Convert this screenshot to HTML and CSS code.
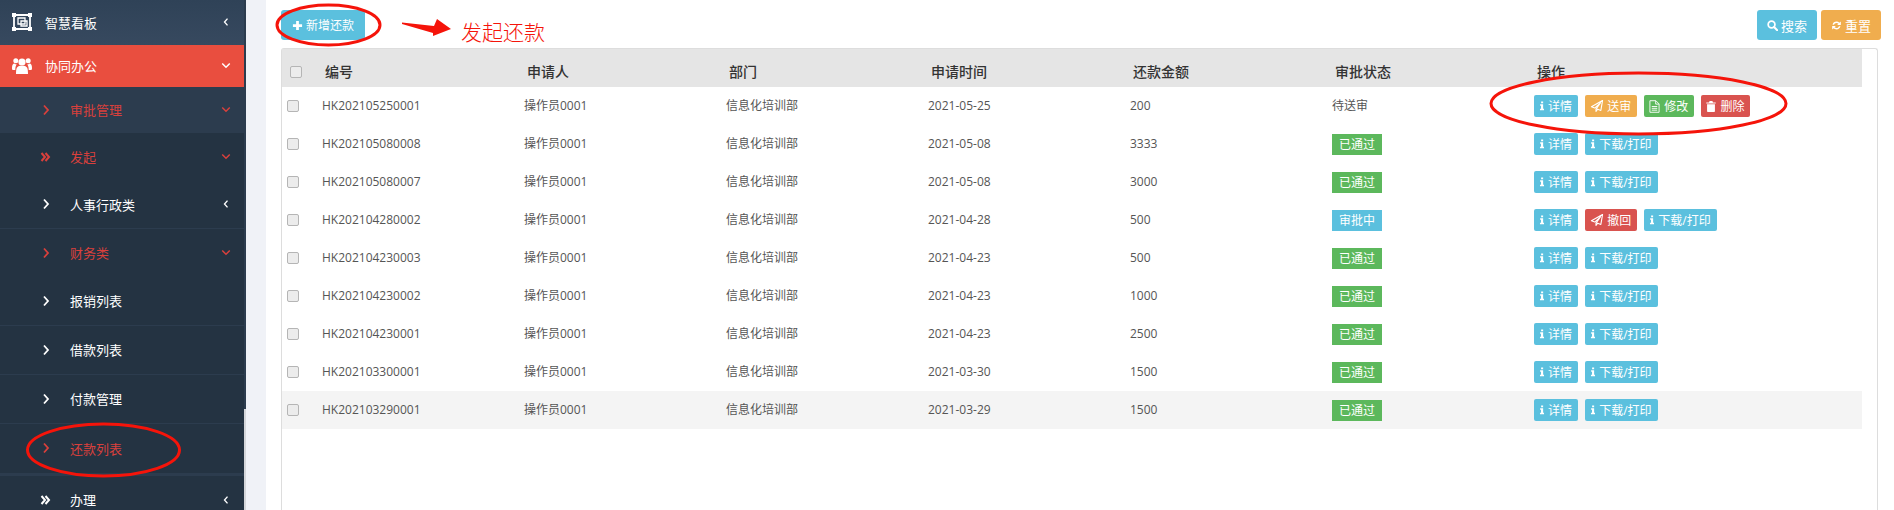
FILE: index.html
```html
<!DOCTYPE html>
<html lang="zh-CN">

<head>
    <meta charset="UTF-8">
    <meta name="viewport" content="width=device-width, initial-scale=1.0">
    <title>还款列表</title>
    <link rel="stylesheet" href="styles.css">
</head>

<body>
    <svg class="icon-defs" width="0" height="0">
        <symbol id="i-left" viewBox="0 0 8 12"><path d="M6 1.500 2 6l4 4.500" fill="none" stroke="currentColor" stroke-width="1.800"/></symbol>
        <symbol id="i-down" viewBox="0 0 12 8"><path d="M1.500 1.500 6 6l4.500-4.500" fill="none" stroke="currentColor" stroke-width="1.800"/></symbol>
        <symbol id="i-right" viewBox="0 0 8 12"><path d="M2 1.500 6 6l-4 4.500" fill="none" stroke="currentColor" stroke-width="1.800"/></symbol>
        <symbol id="i-double" viewBox="0 0 12 12"><path d="M1.500 2 5 6l-3.500 4M5.500 2 9 6l-3.500 4" fill="none" stroke="currentColor" stroke-width="2"/></symbol>
        <symbol id="i-info" viewBox="0 0 8 12"><path d="M2.800 0h2.700v2.300H2.800zM1.500 3.800h4v5.700h1.200V11.500H1.300V9.500h1.400V5.800H1.500z" fill="currentColor"/></symbol>
        <symbol id="i-plane" viewBox="0 0 14 14"><path d="M13.500.5 11.500 12.200 7.800 10.700 5.800 13.300V10.600L11 3.300 4.300 9.400.5 7.800z" fill="none" stroke="currentColor" stroke-width="1.300" stroke-linejoin="round"/></symbol>
        <symbol id="i-file" viewBox="0 0 12 14"><path d="M1 .7h6.500L11 4.200v9.100H1zM7.300.9v3.500h3.500M3 7h6M3 9h6M3 11h6" fill="none" stroke="currentColor" stroke-width="1"/></symbol>
        <symbol id="i-trash" viewBox="0 0 12 14"><path d="M4.200 0h3.600l.7 1.800H12v1.400H0V1.800h3.500zM1 4h10v8.600c0 .8-.5 1.400-1.200 1.400H2.200C1.500 14 1 13.400 1 12.600z" fill="currentColor"/></symbol>
        <symbol id="i-search" viewBox="0 0 14 14"><circle cx="5.800" cy="5.800" r="4.300" fill="none" stroke="currentColor" stroke-width="2.200"/><path d="m9 9 4 4" stroke="currentColor" stroke-width="2.600" stroke-linecap="round"/></symbol>
        <symbol id="i-refresh" viewBox="0 0 14 14"><path d="M2 6c.5-2.500 2.500-4 5-4 1.500 0 2.700.6 3.600 1.500L12.500 1.800V6.500H7.800l1.700-1.800C8.900 4 8 3.700 7 3.700 5.500 3.700 4.300 4.600 3.900 6zM12 8c-.5 2.500-2.500 4-5 4-1.500 0-2.700-.6-3.600-1.500L1.500 12.200V7.500h4.700L4.500 9.300c.6.700 1.500 1 2.500 1 1.500 0 2.700-.9 3.100-2.300z" fill="currentColor"/></symbol>
        <symbol id="i-plus" viewBox="0 0 12 12"><path d="M4.500 1h3v3.500H11v3H7.500V11h-3V7.500H1v-3h3.500z" fill="currentColor"/></symbol>
        <symbol id="i-users" viewBox="0 0 20 18"><circle cx="10" cy="5" r="3.600" fill="currentColor"/><circle cx="3.800" cy="3.800" r="2.500" fill="currentColor"/><circle cx="16.200" cy="3.800" r="2.500" fill="currentColor"/><path d="M5 10.500c1-1.300 2.300-1.700 5-1.700s4 .4 5 1.700c.7 1 1 3 1 6.500H4c0-3.500.3-5.500 1-6.500zM0 11c0-3 .8-4.500 2.500-4.500.6.600 1.300 1 2.300 1.100-.9 1-1.500 2.500-1.500 5.400H1c-.6 0-1-.4-1-2zM20 11c0-3-.8-4.500-2.500-4.500-.6.600-1.300 1-2.300 1.100.9 1 1.500 2.500 1.500 5.400H19c.6 0 1-.4 1-2z" fill="currentColor"/></symbol>
        <symbol id="i-board" viewBox="0 0 20 18"><path d="M2 2h16v14H2z" fill="none" stroke="currentColor" stroke-width="1.800"/><path d="M6 5h7v6H6zM9 8h6v5H9z" fill="none" stroke="currentColor" stroke-width="1.300"/><path d="M0 0h4v4H0zM16 0h4v4h-4zM0 14h4v4H0zM16 14h4v4h-4z" fill="currentColor"/></symbol>
    </svg>

    <aside class="sidebar">
        <nav class="menu">
            <a class="menu-item top">
                <svg class="menu-icon"><use href="#i-board"/></svg>
                <span class="menu-text">智慧看板</span>
                <svg class="arrow-left"><use href="#i-left"/></svg>
            </a>
            <a class="menu-item main-open">
                <svg class="menu-icon"><use href="#i-users"/></svg>
                <span class="menu-text">协同办公</span>
                <svg class="arrow-down"><use href="#i-down"/></svg>
            </a>
            <a class="menu-item sub first red">
                <svg class="bullet"><use href="#i-right"/></svg>
                <span class="sub-text">审批管理</span>
                <svg class="arrow-down"><use href="#i-down"/></svg>
            </a>
            <a class="menu-item sub red">
                <svg class="bullet double"><use href="#i-double"/></svg>
                <span class="sub-text">发起</span>
                <svg class="arrow-down"><use href="#i-down"/></svg>
            </a>
            <a class="menu-item sub lined">
                <svg class="bullet"><use href="#i-right"/></svg>
                <span class="sub-text">人事行政类</span>
                <svg class="arrow-left"><use href="#i-left"/></svg>
            </a>
            <a class="menu-item sub red">
                <svg class="bullet"><use href="#i-right"/></svg>
                <span class="sub-text">财务类</span>
                <svg class="arrow-down"><use href="#i-down"/></svg>
            </a>
            <a class="menu-item sub tall lined">
                <svg class="bullet"><use href="#i-right"/></svg>
                <span class="sub-text">报销列表</span>
            </a>
            <a class="menu-item sub tall lined">
                <svg class="bullet"><use href="#i-right"/></svg>
                <span class="sub-text">借款列表</span>
            </a>
            <a class="menu-item sub tall lined">
                <svg class="bullet"><use href="#i-right"/></svg>
                <span class="sub-text">付款管理</span>
            </a>
            <a class="menu-item sub tall red last">
                <svg class="bullet"><use href="#i-right"/></svg>
                <span class="sub-text">还款列表</span>
            </a>
            <a class="menu-item sub">
                <svg class="bullet double"><use href="#i-double"/></svg>
                <span class="sub-text">办理</span>
                <svg class="arrow-left"><use href="#i-left"/></svg>
            </a>
        </nav>
        <div class="scroll-track">
            <div class="scroll-thumb"></div>
        </div>
    </aside>

    <main class="content">
        <div class="toolbar">
            <button class="btn info"><svg class="btn-icon"><use href="#i-plus"/></svg>新增还款</button>
            <div class="toolbar-right">
                <button class="btn info"><svg class="btn-icon"><use href="#i-search"/></svg>搜索</button>
                <button class="btn warning"><svg class="btn-icon"><use href="#i-refresh"/></svg>重置</button>
            </div>
        </div>

        <div class="panel">
            <table class="list">
                <colgroup>
                    <col class="col-check">
                    <col class="col-data">
                    <col class="col-data">
                    <col class="col-data">
                    <col class="col-data">
                    <col class="col-data">
                    <col class="col-data">
                    <col>
                </colgroup>
                <thead>
                    <tr>
                        <th><input type="checkbox"></th>
                        <th>编号</th>
                        <th>申请人</th>
                        <th>部门</th>
                        <th>申请时间</th>
                        <th>还款金额</th>
                        <th>审批状态</th>
                        <th>操作</th>
                    </tr>
                </thead>
                <tbody>
                    <tr>
                        <td><input type="checkbox"></td>
                        <td>HK202105250001</td>
                        <td>操作员0001</td>
                        <td>信息化培训部</td>
                        <td>2021-05-25</td>
                        <td>200</td>
                        <td class="pending">待送审</td>
                        <td>
                            <a class="mini info"><svg class="ico-info"><use href="#i-info"/></svg>详情</a>
                            <a class="mini warning"><svg class="ico-plane"><use href="#i-plane"/></svg>送审</a>
                            <a class="mini success"><svg class="ico-file"><use href="#i-file"/></svg>修改</a>
                            <a class="mini danger"><svg class="ico-trash"><use href="#i-trash"/></svg>删除</a>
                        </td>
                    </tr>
                    <tr>
                        <td><input type="checkbox"></td>
                        <td>HK202105080008</td>
                        <td>操作员0001</td>
                        <td>信息化培训部</td>
                        <td>2021-05-08</td>
                        <td>3333</td>
                        <td><span class="badge success">已通过</span></td>
                        <td>
                            <a class="mini info"><svg class="ico-info"><use href="#i-info"/></svg>详情</a>
                            <a class="mini info"><svg class="ico-info"><use href="#i-info"/></svg>下载/打印</a>
                        </td>
                    </tr>
                    <tr>
                        <td><input type="checkbox"></td>
                        <td>HK202105080007</td>
                        <td>操作员0001</td>
                        <td>信息化培训部</td>
                        <td>2021-05-08</td>
                        <td>3000</td>
                        <td><span class="badge success">已通过</span></td>
                        <td>
                            <a class="mini info"><svg class="ico-info"><use href="#i-info"/></svg>详情</a>
                            <a class="mini info"><svg class="ico-info"><use href="#i-info"/></svg>下载/打印</a>
                        </td>
                    </tr>
                    <tr>
                        <td><input type="checkbox"></td>
                        <td>HK202104280002</td>
                        <td>操作员0001</td>
                        <td>信息化培训部</td>
                        <td>2021-04-28</td>
                        <td>500</td>
                        <td><span class="badge info">审批中</span></td>
                        <td>
                            <a class="mini info"><svg class="ico-info"><use href="#i-info"/></svg>详情</a>
                            <a class="mini danger"><svg class="ico-plane"><use href="#i-plane"/></svg>撤回</a>
                            <a class="mini info"><svg class="ico-info"><use href="#i-info"/></svg>下载/打印</a>
                        </td>
                    </tr>
                    <tr>
                        <td><input type="checkbox"></td>
                        <td>HK202104230003</td>
                        <td>操作员0001</td>
                        <td>信息化培训部</td>
                        <td>2021-04-23</td>
                        <td>500</td>
                        <td><span class="badge success">已通过</span></td>
                        <td>
                            <a class="mini info"><svg class="ico-info"><use href="#i-info"/></svg>详情</a>
                            <a class="mini info"><svg class="ico-info"><use href="#i-info"/></svg>下载/打印</a>
                        </td>
                    </tr>
                    <tr>
                        <td><input type="checkbox"></td>
                        <td>HK202104230002</td>
                        <td>操作员0001</td>
                        <td>信息化培训部</td>
                        <td>2021-04-23</td>
                        <td>1000</td>
                        <td><span class="badge success">已通过</span></td>
                        <td>
                            <a class="mini info"><svg class="ico-info"><use href="#i-info"/></svg>详情</a>
                            <a class="mini info"><svg class="ico-info"><use href="#i-info"/></svg>下载/打印</a>
                        </td>
                    </tr>
                    <tr>
                        <td><input type="checkbox"></td>
                        <td>HK202104230001</td>
                        <td>操作员0001</td>
                        <td>信息化培训部</td>
                        <td>2021-04-23</td>
                        <td>2500</td>
                        <td><span class="badge success">已通过</span></td>
                        <td>
                            <a class="mini info"><svg class="ico-info"><use href="#i-info"/></svg>详情</a>
                            <a class="mini info"><svg class="ico-info"><use href="#i-info"/></svg>下载/打印</a>
                        </td>
                    </tr>
                    <tr>
                        <td><input type="checkbox"></td>
                        <td>HK202103300001</td>
                        <td>操作员0001</td>
                        <td>信息化培训部</td>
                        <td>2021-03-30</td>
                        <td>1500</td>
                        <td><span class="badge success">已通过</span></td>
                        <td>
                            <a class="mini info"><svg class="ico-info"><use href="#i-info"/></svg>详情</a>
                            <a class="mini info"><svg class="ico-info"><use href="#i-info"/></svg>下载/打印</a>
                        </td>
                    </tr>
                    <tr class="hover">
                        <td><input type="checkbox"></td>
                        <td>HK202103290001</td>
                        <td>操作员0001</td>
                        <td>信息化培训部</td>
                        <td>2021-03-29</td>
                        <td>1500</td>
                        <td><span class="badge success">已通过</span></td>
                        <td>
                            <a class="mini info"><svg class="ico-info"><use href="#i-info"/></svg>详情</a>
                            <a class="mini info"><svg class="ico-info"><use href="#i-info"/></svg>下载/打印</a>
                        </td>
                    </tr>
                </tbody>
            </table>
        </div>
    </main>

    <!-- red marks drawn over the screenshot -->
    <svg class="marks" width="1894" height="510">
        <ellipse cx="328.500" cy="25" rx="51.500" ry="20" />
        <ellipse cx="1638.500" cy="103.500" rx="147.500" ry="30.500" />
        <ellipse cx="103.500" cy="450" rx="76" ry="26" />
        <polygon class="arrow" points="402,22.500 434,26 437,19 451,29 433,36 433,33 402,24" />
    </svg>
    <span class="mark-text">发起还款</span>
</body>

</html>
```

FILE: styles.css
```css
body {
    margin: 0;
    height: 510px;
    overflow: hidden;
    display: flex;
    font-family: "Open Sans", "Noto Sans CJK SC", sans-serif;
    font-size: 12px;
    color: #555;
    background: #fff;
}

.icon-defs {
    position: absolute;
}

/* sidebar */
.sidebar {
    width: 246px;
    height: 510px;
    flex: none;
    display: flex;
    margin-right: 20px;
    box-shadow: 20px 0 0 #f0f2f7;
}

.menu {
    width: 244px;
    background: #243342;
}

.menu-item {
    display: flex;
    align-items: center;
    box-sizing: border-box;
    height: 48px;
    padding-bottom: 1px;
    font-size: 13px;
    color: #fff;
}

.top {
    height: 45px;
    background: linear-gradient(#2f4257, #37495f);
}

.main-open {
    height: 42px;
    background: #e94e3f;
}

.first {
    height: 46px;
    background: #2c3c4e;
}

.tall {
    height: 49px;
}

.lined {
    border-bottom: 1px solid #2c3c4e;
}

.last {
    border-bottom: 3px solid #2c3c4e;
    height: 52px;
}

.red {
    color: #d9403c;
}

.menu-icon {
    width: 20px;
    height: 18px;
    margin: 0 13px 0 12px;
}

.menu-text {
    flex: 1;
}

.sub-text {
    flex: 1;
}

.bullet {
    width: 8px;
    height: 12px;
    margin: 0 20px 0 42px;
}

.bullet.double {
    width: 12px;
    margin: 0 18px 0 40px;
}

.arrow-left {
    width: 6px;
    height: 10px;
    margin-right: 15px;
}

.arrow-down {
    width: 10px;
    height: 7px;
    margin-right: 13px;
}

.scroll-track {
    width: 2px;
    display: flex;
    flex-direction: column;
    background: #d4d6da;
}

.scroll-thumb {
    height: 409px;
    background: #2c3c4e;
}

/* content */
.content {
    flex: 1;
    min-width: 0;
    padding: 10px 13px 0 15px;
}

.toolbar {
    display: flex;
    justify-content: space-between;
    margin-bottom: 8px;
}

.toolbar-right {
    display: flex;
    gap: 4px;
}

.btn {
    height: 30px;
    padding: 0 11px;
    border: none;
    border-radius: 3px;
    display: flex;
    align-items: center;
    font-family: inherit;
    font-size: 12px;
    color: #fff;
}

.toolbar-right .btn {
    width: 60px;
    justify-content: center;
    padding: 0;
    font-size: 13px;
}

.btn-icon {
    width: 11px;
    height: 11px;
    margin-right: 3px;
}

.info {
    background: #5bc0de;
}

.warning {
    background: #f0ad4e;
}

.success {
    background: #5cb85c;
}

.danger {
    background: #d9534f;
}

.panel {
    margin-right: 3px;
    height: 470px;
    padding-right: 15px;
    border: 1px solid #ddd;
    border-bottom: none;
    border-radius: 3px 3px 0 0;
}

.list {
    width: 100%;
    table-layout: fixed;
    border-collapse: collapse;
}

.col-check {
    width: 32px;
}

.col-data {
    width: 202px;
}

.list th {
    height: 38px;
    padding: 6px 0 0 11px;
    box-sizing: border-box;
    background: #e5e5e5;
    text-align: left;
    font-size: 14px;
    font-weight: 500;
    color: #333;
}

.list th:first-child {
    padding: 8px 0 0 8px;
}

.list td {
    height: 38px;
    padding: 0 0 0 8px;
    box-sizing: border-box;
    white-space: nowrap;
}

.list td:first-child {
    padding-left: 5px;
}

/* plain text sits a pixel above the row centre */
.list td:nth-child(n+2):nth-child(-n+6),
.list td.pending {
    padding-bottom: 2px;
}

.hover td {
    background: #f4f4f4;
}

input[type=checkbox] {
    appearance: none;
    display: block;
    width: 12px;
    height: 12px;
    margin: 0;
    border: 1px solid #b5b5b5;
    border-radius: 2px;
    background: #ececec;
}

.mini {
    display: inline-flex;
    align-items: center;
    height: 22px;
    padding: 0 6px 0 5px;
    margin-right: 4px;
    border-radius: 2px;
    vertical-align: middle;
    color: #fff;
}

.ico-info {
    width: 6px;
    height: 10px;
    margin-right: 3px;
}

.ico-plane {
    width: 14px;
    height: 12px;
    margin-right: 3px;
}

.ico-file {
    width: 11px;
    height: 13px;
    margin-right: 4px;
}

.ico-trash {
    width: 10px;
    height: 11px;
    margin-right: 4px;
}

.badge {
    display: inline-block;
    height: 21px;
    line-height: 21px;
    padding: 0 7px;
    color: #fff;
}

/* annotations on top */
.marks {
    position: absolute;
    top: 0;
    left: 0;
    pointer-events: none;
}

.marks ellipse {
    fill: none;
    stroke: #f5140a;
    stroke-width: 3;
}

.marks .arrow {
    fill: #f5140a;
}

.mark-text {
    position: absolute;
    left: 461px;
    top: 16px;
    font-size: 21px;
    font-weight: 300;
    color: #f5140a;
    font-family: "Noto Sans CJK SC", sans-serif;
}
```
